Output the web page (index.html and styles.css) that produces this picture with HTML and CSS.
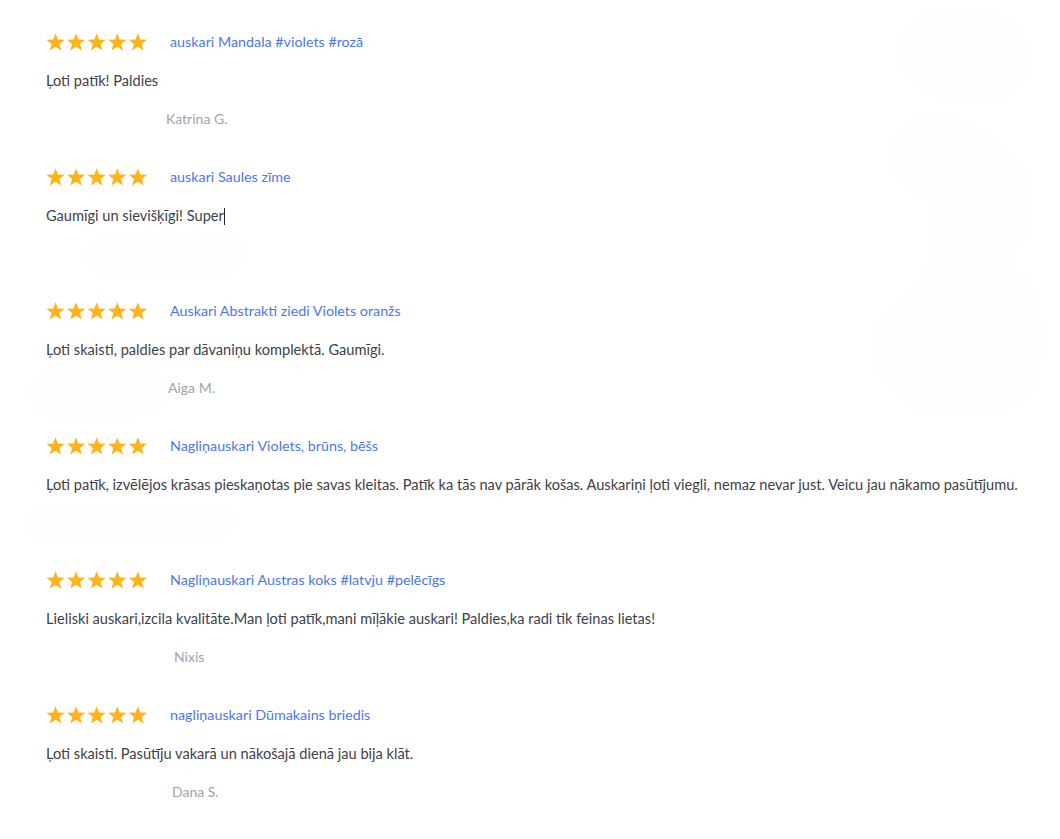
FILE: index.html
```html
<!DOCTYPE html>
<html lang="lv">
<head>
<meta charset="utf-8">
<title>Atsauksmes</title>
<link rel="stylesheet" href="styles.css">
</head>
<body>
<svg class="decor" width="1060" height="839" viewBox="0 0 1060 839" aria-hidden="true">
  <path d="M900 40 C 910 5, 960 0, 1000 12 C 1035 25, 1035 80, 1015 95 C 990 112, 940 105, 915 85 C 898 72, 895 55, 900 40 Z"/>
  <path d="M890 150 C 895 110, 940 100, 985 130 C 1030 150, 1045 205, 1025 240 C 1015 255, 1012 262, 1018 268 C 1045 285, 1045 330, 1040 380 C 1035 415, 960 425, 915 410 C 875 395, 865 350, 880 318 C 890 295, 920 280, 928 262 C 935 245, 938 210, 925 200 C 895 190, 885 170, 890 150 Z"/>
  <path d="M115 232 L 220 232 C 245 232, 250 250, 248 258 C 245 275, 225 278, 205 278 L 115 278 C 90 278, 85 265, 85 255 C 85 240, 95 232, 115 232 Z"/>
  <path d="M60 368 L 140 368 C 160 368, 168 380, 168 392 C 168 408, 155 418, 135 418 L 55 418 C 35 418, 28 405, 28 392 C 28 378, 40 368, 60 368 Z"/>
  <path d="M50 505 L 205 505 C 230 505, 237 515, 237 523 C 237 535, 225 543, 205 543 L 50 543 C 30 543, 22 533, 22 523 C 22 513, 30 505, 50 505 Z"/>
</svg>

<main class="reviews">
  <article class="review">
    <div class="head">
      <span class="stars"><svg viewBox="0 0 102 18"><use href="#s" x="0"/><use href="#s" x="20.6"/><use href="#s" x="41.2"/><use href="#s" x="61.8"/><use href="#s" x="82.4"/></svg></span>
      <a class="product" href="#">auskari Mandala #violets #rozā</a>
    </div>
    <p class="text">Ļoti patīk! Paldies</p>
    <p class="author a1">Katrina G.</p>
  </article>

  <article class="review">
    <div class="head">
      <span class="stars"><svg viewBox="0 0 102 18"><use href="#s" x="0"/><use href="#s" x="20.6"/><use href="#s" x="41.2"/><use href="#s" x="61.8"/><use href="#s" x="82.4"/></svg></span>
      <a class="product" href="#">auskari Saules zīme</a>
    </div>
    <p class="text">Gaumīgi un sievišķīgi! Super<span class="caret"></span></p>
    <p class="author"></p>
  </article>

  <article class="review">
    <div class="head">
      <span class="stars"><svg viewBox="0 0 102 18"><use href="#s" x="0"/><use href="#s" x="20.6"/><use href="#s" x="41.2"/><use href="#s" x="61.8"/><use href="#s" x="82.4"/></svg></span>
      <a class="product" href="#">Auskari Abstrakti ziedi Violets oranžs</a>
    </div>
    <p class="text">Ļoti skaisti, paldies par dāvaniņu komplektā. Gaumīgi.</p>
    <p class="author a3">Aiga M.</p>
  </article>

  <article class="review">
    <div class="head">
      <span class="stars"><svg viewBox="0 0 102 18"><use href="#s" x="0"/><use href="#s" x="20.6"/><use href="#s" x="41.2"/><use href="#s" x="61.8"/><use href="#s" x="82.4"/></svg></span>
      <a class="product" href="#">Nagliņauskari Violets, brūns, bēšs</a>
    </div>
    <p class="text">Ļoti patīk, izvēlējos krāsas pieskaņotas pie savas kleitas. Patīk ka tās nav pārāk košas. Auskariņi ļoti viegli, nemaz nevar just. Veicu jau nākamo pasūtījumu.</p>
    <p class="author"></p>
  </article>

  <article class="review">
    <div class="head">
      <span class="stars"><svg viewBox="0 0 102 18"><use href="#s" x="0"/><use href="#s" x="20.6"/><use href="#s" x="41.2"/><use href="#s" x="61.8"/><use href="#s" x="82.4"/></svg></span>
      <a class="product" href="#">Nagliņauskari Austras koks #latvju #pelēcīgs</a>
    </div>
    <p class="text">Lieliski auskari,izcila kvalitāte.Man ļoti patīk,mani mīļākie auskari! Paldies,ka radi tik feinas lietas!</p>
    <p class="author a5">Nixis</p>
  </article>

  <article class="review">
    <div class="head">
      <span class="stars"><svg viewBox="0 0 102 18"><use href="#s" x="0"/><use href="#s" x="20.6"/><use href="#s" x="41.2"/><use href="#s" x="61.8"/><use href="#s" x="82.4"/></svg></span>
      <a class="product" href="#">nagliņauskari Dūmakains briedis</a>
    </div>
    <p class="text">Ļoti skaisti. Pasūtīju vakarā un nākošajā dienā jau bija klāt.</p>
    <p class="author a6">Dana S.</p>
  </article>
</main>

<svg class="defs" width="0" height="0" aria-hidden="true">
  <defs>
    <path id="s" d="M9.5 0.2 L11.9 6.5 L18.7 6.7 L13.4 10.9 L15.3 17.6 L9.5 13.7 L3.7 17.6 L5.6 10.9 L0.3 6.7 L7.1 6.5 Z"/>
  </defs>
</svg>
</body>
</html>
```

FILE: styles.css
```css
html, body {
  margin: 0;
  padding: 0;
  background: #ffffff;
}

body {
  font-family: Lato, "Noto Sans", "Liberation Sans", sans-serif;
  font-size: 14.6px;
  color: #40404c;
  position: relative;
  min-height: 839px;
}

.decor {
  position: absolute;
  left: 0;
  top: 0;
  z-index: 0;
}

.decor path {
  fill: #fefefe;
}

.defs {
  position: absolute;
}

.reviews {
  position: relative;
  z-index: 1;
  padding: 32px 0 0 46px;
  display: flex;
  flex-direction: column;
  gap: 37.5px;
}

.review {
  display: flex;
  flex-direction: column;
}

.head {
  display: flex;
  align-items: center;
  gap: 22px;
  height: 20px;
}

.stars {
  display: block;
  width: 102px;
  height: 18px;
}

.stars svg {
  display: block;
  width: 102px;
  height: 18px;
  fill: #ffb41c;
}

.product {
  color: #4d76f2;
  text-decoration: none;
  font-size: 14.3px;
  line-height: 20px;
}

.text {
  margin: 19px 0 0;
  line-height: 20px;
}

.caret {
  display: inline-block;
  width: 1px;
  height: 17px;
  background: #222;
  vertical-align: -4px;
}

.author {
  margin: 18px 0 0 120px;
  height: 20px;
  line-height: 20px;
  font-size: 14px;
  color: #9ea3ab;
}

.author.a3 { margin-left: 122px; }
.author.a5 { margin-left: 128px; }
.author.a6 { margin-left: 126px; }
```
